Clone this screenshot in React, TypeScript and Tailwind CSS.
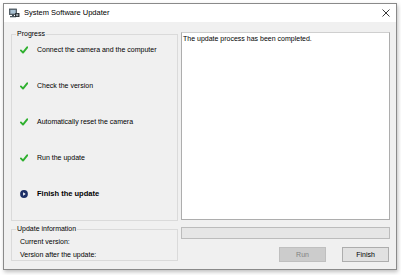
import React from "react";

const font = { fontFamily: '"Liberation Sans", Arial, sans-serif' };

function Check() {
  return (
    <svg width="8" height="8" viewBox="0 0 8 8" className="shrink-0">
      <path d="M0.9 4.4 L3 6.6 L7.2 1.3" fill="none" stroke="#2fb02f" strokeWidth="1.9" strokeLinecap="round" strokeLinejoin="round" />
    </svg>
  );
}

function PlayIcon() {
  return (
    <svg width="8" height="8" viewBox="0 0 8 8" className="shrink-0">
      <circle cx="4" cy="4" r="3.9" fill="#1d2f66" />
      <path d="M3.1 2.2 L5.7 4 L3.1 5.8 Z" fill="#ffffff" />
    </svg>
  );
}

function AppIcon() {
  return (
    <svg width="11" height="11" viewBox="0 0 11 11" className="shrink-0">
      <rect x="0.5" y="1" width="7" height="5.5" fill="#6d7b86" stroke="#3e4a52" strokeWidth="0.8" />
      <rect x="1.5" y="2" width="5" height="3.5" fill="#a9c2d4" />
      <rect x="3" y="6.5" width="2" height="1.5" fill="#3e4a52" />
      <rect x="1" y="8" width="6" height="1.3" fill="#4a565e" />
      <rect x="6" y="5" width="4.5" height="4" rx="0.6" fill="#2b3136" />
      <circle cx="8.2" cy="7" r="1.2" fill="#9aa4ab" />
    </svg>
  );
}

const steps = [
  "Connect the camera and the computer",
  "Check the version",
  "Automatically reset the camera",
  "Run the update",
];

export default function App() {
  return (
    <div className="w-[401px] h-[275px] bg-white pt-[3px] pl-[3px]" style={font}>
      <div className="w-[394px] h-[267px] border border-[#8a8a8a] shadow-[1px_2px_4px_rgba(0,0,0,0.25)] flex flex-col bg-[#f0f0f0]">
        {/* title bar */}
        <div className="h-[18px] bg-white flex items-center pl-[5px] pr-[6px] shrink-0">
          <AppIcon />
          <span className="ml-[4px] text-[7.5px] leading-[10px] text-black whitespace-nowrap">System Software Updater</span>
          <div className="flex-1" />
          <svg width="8" height="8" viewBox="0 0 8 8">
            <path d="M0.5 0.5 L7.5 7.5 M7.5 0.5 L0.5 7.5" stroke="#222" strokeWidth="0.9" />
          </svg>
        </div>
        {/* body */}
        <div className="flex-1 flex pl-[7px] pr-[5px] pt-[10px] gap-[3px] text-[7px] leading-[10px] text-black whitespace-nowrap">
          {/* left column */}
          <div className="w-[167px] mt-[2px] flex flex-col">
            <div className="relative h-[187px] border border-[#dadada] flex flex-col pt-[10px] pl-[8px] gap-[26px]">
              <span className="absolute -top-[6px] left-[4px] px-[1px] bg-[#f0f0f0]">Progress</span>
              {steps.map((s) => (
                <div key={s} className="h-[10px] flex items-center gap-[9px]">
                  <Check />
                  <span>{s}</span>
                </div>
              ))}
              <div className="h-[10px] flex items-center gap-[9px]">
                <PlayIcon />
                <span className="font-bold text-[7.5px]">Finish the update</span>
              </div>
            </div>
            <div className="relative mt-[8px] h-[32px] border border-[#dadada] flex flex-col pt-[7px] pl-[8px] gap-[3px]">
              <span className="absolute -top-[6px] left-[4px] px-[1px] bg-[#f0f0f0]">Update information</span>
              <span>Current version:</span>
              <span>Version after the update:</span>
            </div>
          </div>
          {/* right column */}
          <div className="w-[209px] flex flex-col">
            <div className="h-[188px] bg-white border border-[#adadad] border-t-[#cfcfcf] px-[1px] pt-[1px]">
              The update process has been completed.
            </div>
            <div className="mt-[7px] h-[12px] bg-[#e6e6e6] border border-[#bcbcbc]" />
            <div className="mt-[8px] flex justify-end gap-[16px] pr-[1px]">
              <div className="w-[47px] h-[15px] bg-[#cccccc] border border-[#bfbfbf] flex items-center justify-center text-[#838383]">
                Run
              </div>
              <div className="w-[47px] h-[15px] bg-[#e1e1e1] border border-[#adadad] flex items-center justify-center">
                Finish
              </div>
            </div>
          </div>
        </div>
      </div>
    </div>
  );
}
